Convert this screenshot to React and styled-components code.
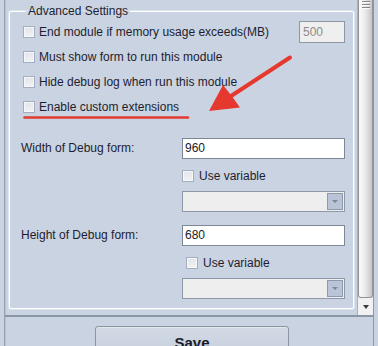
import React from 'react';
import styled, { createGlobalStyle } from 'styled-components';

const Global = createGlobalStyle`
  html, body { margin: 0; padding: 0; background: #cad3e1; }
  body { font-family: "Liberation Sans", Arial, sans-serif; font-size: 12px; color: #1e1e30; }
  * { box-sizing: border-box; }
`;

const Frame = styled.div`
  position: relative;
  width: 378px;
  height: 346px;
  overflow: hidden;
  background: #cad3e1;
  padding: 0 4px;
  display: flex;
`;

const Panel = styled.div`
  flex: 1;
  display: flex;
  flex-direction: column;
  border-left: 1px solid #98a2ae;
  border-right: 1px solid #8f99a6;
  box-shadow: inset 1px 0 0 #b9c2ce;
  min-height: 0;
`;

const ScrollPane = styled.div`
  flex: none;
  height: 317px;
  display: flex;
  border-bottom: 2px solid #8b96a5;
`;

const Viewport = styled.div`
  flex: 1;
  overflow: hidden;
  padding: 4px 3px 0 4px;
`;

const Group = styled.fieldset`
  margin: 0;
  padding: 0 8px 9px 11px;
  border: 1px solid #ffffff;
  border-radius: 2px;
  box-shadow: 0 0 0 1px #dde3ec;
  min-width: 0;
`;

const Legend = styled.legend`
  margin-left: 5px;
  padding: 0 2px;
  line-height: 15px;
  font-size: 12px;
  color: #1e1e30;
`;

const CheckList = styled.div`
  display: flex;
  flex-direction: column;
  padding-left: 2px;
`;

const CheckRow = styled.div`
  height: 25px;
  display: flex;
  align-items: center;
  gap: 4px;
  padding-left: ${p => p.$indent || 0}px;
`;

const Box = styled.span`
  width: 12px;
  height: 12px;
  flex: none;
  border: 1px solid #a3afc0;
  background: linear-gradient(#e2e5ea, #f1f2f4);
  box-shadow: inset 0 0 0 1px #f6f7f9;
`;

const Text = styled.span`
  white-space: nowrap;
  color: #1e1e30;
`;

const Spacer = styled.span`
  flex: 1;
`;

const SmallInput = styled.div`
  width: 46px;
  height: 22px;
  border: 1px solid #8c96a4;
  background: #efefef;
  color: #8c8c8c;
  padding-left: 3px;
  line-height: 20px;
  font-size: 12px;
`;

const FormBlock = styled.div`
  display: grid;
  grid-template-columns: 161px 1fr;
  margin-top: ${p => p.$top}px;
`;

const FieldLabel = styled.div`
  line-height: 21px;
  white-space: nowrap;
  color: #1e1e30;
`;

const Fields = styled.div`
  display: flex;
  flex-direction: column;
`;

const TextBox = styled.div`
  height: 21px;
  border: 1px solid #7d8797;
  background: #ffffff;
  padding-left: 2px;
  line-height: 19px;
  color: #1a1a28;
`;

const VarRow = styled.div`
  height: 16px;
  margin-top: 9px;
  display: flex;
  align-items: center;
  gap: 5px;
  padding-left: ${p => p.$indent || 0}px;
`;

const Combo = styled.div`
  height: 21px;
  margin-top: 7px;
  border: 1px solid #8e98a8;
  background: #eeeeee;
  display: flex;
  justify-content: flex-end;
  padding: 1px;
`;

const ComboButton = styled.div`
  width: 16px;
  border: 1px solid #8d9aab;
  background: #b9c5d6;
  display: flex;
  align-items: center;
  justify-content: center;
  &::after {
    content: "";
    border-left: 3px solid transparent;
    border-right: 3px solid transparent;
    border-top: 3px solid #7f8793;
  }
`;

const ScrollBar = styled.div`
  width: 16px;
  display: flex;
  flex-direction: column;
  border-left: 1px solid #a9b0ba;
  background: #ececec;
`;

const Thumb = styled.div`
  flex: 1;
  border: 1px solid #939393;
  border-top: none;
  border-radius: 0 0 3px 3px;
  background: linear-gradient(to right, #fbfbfb, #ebebeb 45%, #c6c6c6);
  display: flex;
  justify-content: center;
  padding-top: 1px;
`;

const Grip = styled.div`
  width: 8px;
  height: 9px;
  background: repeating-linear-gradient(#6f6f6f 0 1px, #ffffff 1px 2px, transparent 2px 3px);
  opacity: 0.8;
`;

const DownButton = styled.div`
  height: 17px;
  background: #f1f1f1;
  display: flex;
  align-items: center;
  justify-content: center;
  &::after {
    content: "";
    border-left: 3.5px solid transparent;
    border-right: 3.5px solid transparent;
    border-top: 4px solid #3c3c3c;
  }
`;

const Footer = styled.div`
  flex: 1;
  min-height: 0;
  overflow: hidden;
  display: flex;
  align-items: flex-start;
  padding: 9px 0 0 90px;
`;

const SaveButton = styled.div`
  flex: none;
  width: 194px;
  height: 36px;
  border: 1px solid #8a94a3;
  border-radius: 3px;
  background: linear-gradient(#d2dae5, #c3cdda);
  box-shadow: inset 0 1px 0 #e2e7ee;
  text-align: center;
  font-weight: bold;
  font-size: 15px;
  line-height: 15px;
  padding-top: 8px;
  color: #1a1a28;
`;

const Overlay = styled.svg`
  position: absolute;
  left: 0;
  top: 0;
  pointer-events: none;
`;

const checks = [
  'End module if memory usage exceeds(MB)',
  'Must show form to run this module',
  'Hide debug log when run this module',
  'Enable custom extensions',
];

function Field({ label, value, top, indent }) {
  return (
    <FormBlock $top={top}>
      <FieldLabel>{label}</FieldLabel>
      <Fields>
        <TextBox>{value}</TextBox>
        <VarRow $indent={indent}>
          <Box />
          <Text>Use variable</Text>
        </VarRow>
        <Combo>
          <ComboButton />
        </Combo>
      </Fields>
    </FormBlock>
  );
}

export default function App() {
  return (
    <>
      <Global />
      <Frame>
        <Panel>
          <ScrollPane>
            <Viewport>
              <Group>
                <Legend>Advanced Settings</Legend>
                <CheckList>
                  {checks.map((c, i) => (
                    <CheckRow key={c}>
                      <Box />
                      <Text>{c}</Text>
                      {i === 0 && (
                        <>
                          <Spacer />
                          <SmallInput>500</SmallInput>
                        </>
                      )}
                    </CheckRow>
                  ))}
                </CheckList>
                <Field label="Width of Debug form:" value="960" top={19} indent={0} />
                <Field label="Height of Debug form:" value="680" top={13} indent={4} />
              </Group>
            </Viewport>
            <ScrollBar>
              <Thumb>
                <Grip />
              </Thumb>
              <DownButton />
            </ScrollBar>
          </ScrollPane>
          <Footer>
            <SaveButton>Save</SaveButton>
          </Footer>
        </Panel>
        <Overlay width="378" height="346" viewBox="0 0 378 346">
          <line x1="24.5" y1="117.5" x2="188" y2="117.5" stroke="#e23b30" strokeWidth="2.6" strokeLinecap="round" />
          <line x1="290" y1="57.5" x2="228" y2="98" stroke="#e5392f" strokeWidth="4" strokeLinecap="round" />
          <polygon points="209,111 223,85 231,95 240,107.5" fill="#e5392f" />
        </Overlay>
      </Frame>
    </>
  );
}
